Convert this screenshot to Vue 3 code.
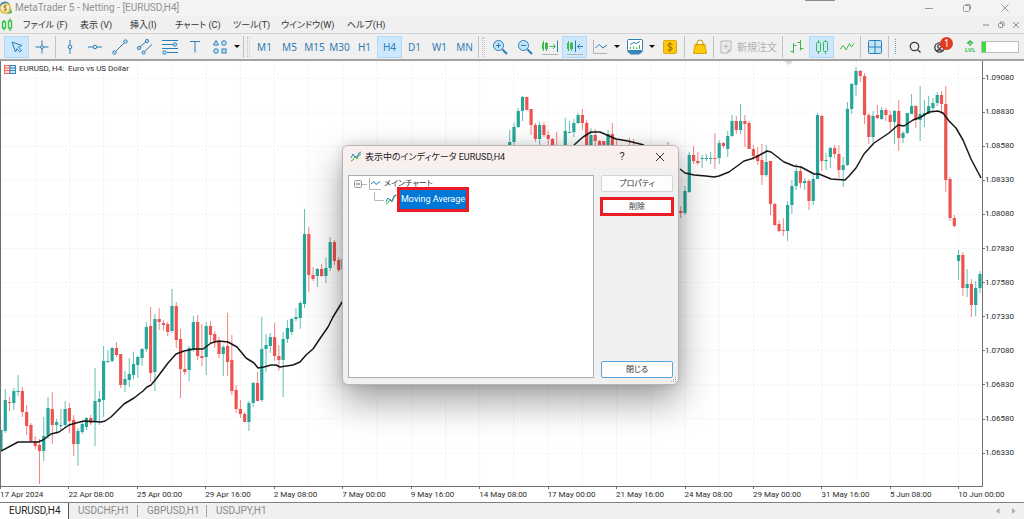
<script setup>
const menus = ['ファイル (F)', '表示 (V)', '挿入(I)', 'チャート (C)', 'ツール(T)', 'ウインドウ(W)', 'ヘルプ(H)']
const frames = ['M1', 'M5', 'M15', 'M30', 'H1', 'H4', 'D1', 'W1', 'MN']
const tabs = ['EURUSD,H4', 'USDCHF,H1', 'GBPUSD,H1', 'USDJPY,H1']
const prices = ['1.09080', '1.08830', '1.08580', '1.08330', '1.08080', '1.07830', '1.07580', '1.07330', '1.07080', '1.06830', '1.06580', '1.06330']
const times = ['17 Apr 2024', '22 Apr 08:00', '25 Apr 00:00', '29 Apr 16:00', '2 May 08:00', '7 May 00:00', '9 May 16:00', '14 May 08:00', '17 May 00:00', '21 May 16:00', '24 May 08:00', '29 May 00:00', '31 May 16:00', '5 Jun 08:00', '10 Jun 00:00']

// Each run: index of its first bar, then bars as "direction high low body-top body-bottom".
const runs = [
  [0, `u 430 451 430 450,u 389 433 400 431,d 397 411 402 403,u 388 410 391 403,u 375 396 391 392,d 387 417 391 412,d 405 435 412 426,d 423 442 425 441,d 436 449 441 446,d 439 484 445 451,u 417 461 436 451,u 397 439 408 436,d 392 444 409 425,u 419 434 422 425,u 409 431 425 426,u 401 428 409 425,d 403 433 408 421,d 415 456 420 444,u 428 466 431 444,u 421 434 424 432,u 417 430 418 427,d 415 425 418 423,u 368 446 401 422,u 391 425 399 402,u 346 417 361 400,u 350 363 361 362,u 347 362 348 361,d 342 357 348 355,d 354 388 354 385,u 371 392 379 385,u 358 387 374 380,u 352 379 364 375,u 356 378 357 365,u 348 366 349 358,u 322 352 327 349,d 307 382 326 373,u 314 391 319 372,d 308 330 319 322,d 320 331 323 325,d 322 336 324 332,u 289 333 306 331,d 302 348 306 340,d 329 398 339 369,d 352 375 369 372,u 346 381 348 370,u 316 352 322 350,d 315 360 322 356,d 324 366 356 358,u 322 375 326 357,d 321 343 326 335,d 331 348 334 342,d 337 358 342 354,u 345 376 347 354,d 313 376 346 362,d 335 395 360 391,d 385 413 390 409,d 400 418 409 414,d 412 422 414 422,u 401 431 403 422,u 382 407 383 403,d 372 401 383 401,u 317 402 349 400,u 334 372 345 349,u 333 353 337 346,d 323 361 337 356,d 345 371 356 360,u 332 397 339 360,u 320 343 328 339,u 318 335 319 332,u 308 321 317 319,u 301 329 303 318,u 209 308 234 304,d 227 292 234 275,d 267 281 275 279,u 268 287 269 276,d 264 277 269 276,u 258 283 268 276,u 237 271 242 268,d 240 265 242 261,d 257 272 260 270,u 255 276 259 269`],
  [119, `u 130 150 142 150,u 123 145 127 142,u 108 128 111 127,u 96 121 97 111,d 97 110 97 110,d 109 135 109 125,d 123 142 125 139,u 122 145 125 139,d 122 137 125 135,d 131 145 135 139,d 138 150 139 150,d 132 150 149 150`],
  [132, `u 118 150 131 150,u 121 133 132 133,u 119 137 123 132,u 113 124 115 123,d 109 130 115 123,d 120 150 123 150,u 128 150 135 150,d 129 150 135 141,d 140 150 141 150,d 141 150 141 150,u 130 150 134 150,d 123 150 134 145,d 139 150 146 150`],
  [147, `d 138 150 149 150,d 139 150 149 150`],
  [156, `d 142 150 149 150`],
  [159, `d 206 218 211 213,u 186 215 191 213,u 152 193 155 192,d 146 164 155 161,d 152 165 161 163,u 155 168 158 159,u 154 161 158 159,u 152 164 158 159,d 133 169 158 159,u 140 164 143 158,d 142 148 143 146,u 131 157 136 149,u 115 137 121 136,d 116 134 121 130,u 104 134 121 130,d 115 147 121 124,d 121 149 123 149,d 145 160 149 156,d 147 165 155 161,d 144 185 160 175,u 145 177 162 175,d 161 215 161 204,d 203 226 204 225,d 220 232 224 231,d 218 236 230 231,u 201 241 205 231,u 180 214 186 205,u 164 190 171 186,d 166 188 171 183,u 178 190 181 183,d 179 210 181 201,u 175 205 179 201,u 113 179 115 179,d 115 171 116 161,u 153 170 160 161,u 147 168 148 157,d 145 158 148 154,d 145 178 154 170,u 157 187 165 170,u 102 166 109 165,u 83 114 84 109,u 67 96 71 85,d 70 82 71 76,d 73 124 76 115,d 113 144 115 137,u 111 142 116 137,d 105 119 115 118,u 107 120 110 119,d 108 121 110 115,d 111 130 115 122,u 110 144 111 122,d 100 151 111 138,u 131 143 133 138,u 113 134 113 133,u 94 114 106 114,d 105 128 106 120,u 86 141 114 120,u 100 127 113 115,u 96 114 106 114,u 98 111 103 108,u 92 106 95 103,d 91 114 95 104,d 86 192 104 180,d 177 221 179 218,d 215 227 218 226,u 250 280 255 261,d 252 296 255 288,u 269 297 284 288,d 279 317 284 305,u 281 316 288 305,u 271 293 274 288`],
]
const STEP = 4.275
const candles = runs.flatMap(([start, text]) =>
  text.split(',').map((row, k) => {
    const [dir, ...v] = row.split(' ')
    const [hi, lo, top, bottom] = v.map(Number)
    return { id: start + k, dir, x: (start + k) * STEP, hi, lo, top, bottom }
  })
)
const average = [
  '0,451 17,442 23,442 37,442 42,440 50,434 58,432 68,425 75,423 83,421 100,422 104,421 110,417 123,404 133,398 142,391 146,387 150,385 155,379 167,363 175,354 183,351 193,349 202,349 210,343 218,341 227,342 236,347 245,358 253,363 257,368 263,367 270,365 275,365 279,367 292,365 299,362 305,355 312,349 318,340 327,327 332,317 343,299',
  '573,145 582,137 590,132 599,132 615,139 627,141 643,145',
  '679,169 684,173 693,175 705,176 713,177 718,176 728,172 743,161 750,159 757,156 766,151 770,152 783,162 793,166 800,167 813,174 818,174 830,179 844,180 848,176 855,168 863,154 873,143 888,133 897,125 903,126 912,120 920,117 928,112 937,111 942,113 948,121 955,128 962,140 970,159 980,178',
]
const vLines = Array.from({ length: 28 }, (_, i) => (i + 1) * 34.2)
const hLines = Array.from({ length: 12 }, (_, i) => 78 + i * 34.1)
</script>

<template>
  <div class="app">
    <header class="titlebar">
      <svg class="logo" width="13" height="14" viewBox="0 0 13 14">
        <circle cx="5" cy="7" r="6" fill="#e9c34a" />
        <path d="M1 2Q5-1 9 2L11 6Q10 2 5 2Q1 3-1 7Z" fill="#3b82b8" />
        <path d="M11 7L12 12L6 13.500Q10 12 11 7Z" fill="#4fae5a" />
        <circle cx="5" cy="7" r="4" fill="#f4efd8" />
        <path d="M7 5Q5 3.800 3.800 5Q3.500 6.500 5.300 7Q7.200 7.600 6.300 9Q5 10 3.400 9M5.200 3.500V10.500" fill="none" stroke="#a98a2e" />
      </svg>
      <span class="title">MetaTrader 5 - Netting - [EURUSD,H4]</span>
      <span class="handle"></span>
      <div class="winbtns">
        <button aria-label="最小化"><svg width="10" height="10"><path d="M1 5.500H9" /></svg></button>
        <button aria-label="元に戻す"><svg width="10" height="10"><rect x="1.500" y="2.500" width="6" height="6" rx="1" /><path d="M3.500 1.500H7Q8.500 1.500 8.500 3V6.500" /></svg></button>
        <button aria-label="終了"><svg width="10" height="10"><path d="M1.500 1.500L8.500 8.500M8.500 1.500L1.500 8.500" /></svg></button>
      </div>
    </header>

    <div class="menubar">
      <svg class="docicon" width="12" height="14" viewBox="0 0 12 14">
        <g fill="none" stroke="#35c24b" stroke-width="1.400"><rect x="1.500" y="4" width="3" height="6" /><rect x="7.500" y="3" width="3" height="7" /><path d="M3 2V4M3 10V12.500M9 .5V3M9 10V13" /></g>
      </svg>
      <nav class="menus"><button v-for="m in menus" :key="m">{{ m }}</button></nav>
      <div class="docbtns">
        <button aria-label="チャートを最小化"><svg width="8" height="8"><path d="M1 4H7" /></svg></button>
        <button aria-label="チャートを元に戻す"><svg width="8" height="8"><rect x="1.500" y="2.500" width="4" height="4" rx="1" /><path d="M3 1H5.500Q7 1 7 2.500V5" /></svg></button>
        <button aria-label="チャートを閉じる"><svg width="8" height="8"><path d="M1 1L7 7M7 1L1 7" /></svg></button>
      </div>
    </div>

    <div class="toolbar">
      <button class="tb on" aria-label="カーソル"><svg width="18" height="18" viewBox="0 0 18 18"><path class="b fillb" d="M4 4L14 7.500L10.500 9.200L13.500 12.500L11.800 14L8.800 10.800L7.500 14Z" /></svg></button>
      <button class="tb" aria-label="クロスヘア"><svg width="18" height="18" viewBox="0 0 18 18"><path class="b" d="M9 2.500V7.500M9 10.500V15.500M2.500 9H7.500M10.500 9H15.500" /><circle class="b" cx="9" cy="9" r="1.500" /></svg></button>
      <span class="sep"></span>
      <button class="tb" aria-label="垂直線"><svg width="18" height="18" viewBox="0 0 18 18"><path class="b" d="M9 2V7M9 11V16" /><circle class="b" cx="9" cy="9" r="1.800" /></svg></button>
      <button class="tb" aria-label="水平線"><svg width="18" height="18" viewBox="0 0 18 18"><path class="b" d="M2 9H7M11 9H16" /><circle class="b" cx="9" cy="9" r="1.800" /></svg></button>
      <button class="tb" aria-label="トレンドライン"><svg width="18" height="18" viewBox="0 0 18 18"><path class="b" d="M4.500 13.500L13.500 4.500" /><circle class="b fillb" cx="3.500" cy="14.500" r="1.700" /><circle class="b fillb" cx="14.500" cy="3.500" r="1.700" /></svg></button>
      <button class="tb" aria-label="チャネル"><svg width="18" height="18" viewBox="0 0 18 18"><path class="b" d="M4 9L10 3.500M8.500 13.500L16 6.500" /><circle class="b fillb" cx="3" cy="10" r="1.600" /><circle class="b fillb" cx="11" cy="3" r="1.600" /><circle class="b fillb" cx="7.500" cy="14.500" r="1.600" /></svg></button>
      <button class="tb" aria-label="フィボナッチ"><svg width="18" height="18" viewBox="0 0 18 18"><path class="b" d="M1 2.500H17M1 6.500H12M1 10.500H17M6 14.500H17" /><circle class="b fillb" cx="14" cy="6.500" r="1.700" /><circle class="b fillb" cx="3.500" cy="14.500" r="1.700" /></svg></button>
      <button class="tb" aria-label="テキスト"><svg width="18" height="18" viewBox="0 0 18 18"><path class="b" d="M4 3.500H14M9 3.500V14.500" /></svg></button>
      <button class="tb" aria-label="図形"><svg width="18" height="18" viewBox="0 0 18 18"><path class="b fillb" d="M5 2.500L7.500 7H2.500Z" /><circle class="b fillb" cx="13" cy="5" r="2.300" /><circle class="b fillb" cx="5" cy="13" r="2.300" /><rect class="b fillb" x="11" y="11" width="4" height="4" /></svg></button>
      <button class="drop" aria-label="図形の一覧"><svg width="6" height="3"><path d="M0 0H6L3 3Z" /></svg></button>
      <span class="sep"></span><span class="grip"></span>
      <button v-for="f in frames" :key="f" class="tb tf" :class="{ on: f === 'H4' }">{{ f }}</button>
      <span class="sep"></span><span class="grip"></span>
      <button class="tb" aria-label="拡大"><svg width="18" height="18" viewBox="0 0 18 18"><path class="b thick" d="M11.500 11.500L16 16" /><circle class="b fillb" cx="7.500" cy="7.500" r="5" /><path class="b" d="M5 7.500H10M7.500 5V10" /></svg></button>
      <button class="tb" aria-label="縮小"><svg width="18" height="18" viewBox="0 0 18 18"><path class="b thick" d="M11.500 11.500L16 16" /><circle class="b fillb" cx="7.500" cy="7.500" r="5" /><path class="b" d="M5 7.500H10" /></svg></button>
      <button class="tb" aria-label="自動スクロール"><svg width="18" height="18" viewBox="0 0 18 18"><path class="g" d="M2.500 3V13M5.500 4V13M8.500 8.500H14M12 6L14.500 8.500L12 11" /><rect class="gf" x="1" y="5" width="2" height="6" /><rect class="gf" x="4" y="5" width="3" height="6" /><path class="b" d="M16.500 2.500V14" /><path class="gray" d="M1 16.500H17" /></svg></button>
      <button class="tb on" aria-label="チャートシフト"><svg width="18" height="18" viewBox="0 0 18 18"><path class="g" d="M2.500 3V13M5.500 4V13" /><rect class="gf" x="1" y="5" width="2" height="6" /><rect class="gf" x="4" y="5" width="3" height="6" /><path class="b" d="M9.500 2.500V14M11.500 8.500H17M14 6L11.500 8.500L14 11" /><path class="gray" d="M1 16.500H17" /></svg></button>
      <button class="tb" aria-label="インディケータ"><svg width="18" height="18" viewBox="0 0 18 18"><path class="gray" d="M2.500 2V15.500H16" /><path class="b" d="M4.500 10L8 6.500L12 10L16 7" /></svg></button>
      <button class="drop" aria-label="インディケータの一覧"><svg width="6" height="3"><path d="M0 0H6L3 3Z" /></svg></button>
      <button class="tb" aria-label="テンプレート"><svg width="18" height="18" viewBox="0 0 18 18"><path d="M1.500 12V14L5 16.500H13L16.500 14V12Z" fill="#3d84b8" /><rect x="1.500" y="1.500" width="15" height="11" rx="1" fill="#fff" stroke="#2f7fb8" /><path class="b" d="M4 6.500L8 4.500L10 5.500L14 3.500" /><path class="g" d="M4.500 11V9M7.500 11V8.500M10.500 11V9.500M13.500 11V7" /></svg></button>
      <button class="drop" aria-label="テンプレートの一覧"><svg width="6" height="3"><path d="M0 0H6L3 3Z" /></svg></button>
      <button class="tb" aria-label="シグナル"><svg width="18" height="18" viewBox="0 0 18 18"><rect x="2.500" y="2.500" width="13" height="13" rx="1" fill="#fcc90c" stroke="#e2a906" /><path d="M11.500 6.500Q9 4.800 7 6.200Q6 8.300 9 9Q12 9.600 11 11.500Q9 13.200 6.500 11.500M9 4V14" fill="none" stroke="#a07000" /></svg></button>
      <span class="sep wide"></span>
      <button class="tb" aria-label="マーケット"><svg width="18" height="18" viewBox="0 0 18 18"><path d="M6 8V5Q6 2 9 2Q12 2 12 5V8" fill="none" stroke="#d09a08" /><path d="M4 6.500H14L15.500 15.500H2.500Z" fill="#fcc90c" stroke="#dba30a" /><path d="M6 8V5.500M12 8V5.500" stroke="#d09a08" /></svg></button>
      <span class="sep"></span>
      <button class="order" disabled><svg width="12" height="16" viewBox="0 0 12 16"><path d="M1 2H11V11L8 14H1Z" fill="#ececec" stroke="#b5b5b5" /><path d="M11 11H8V14M6 5V10M3.500 7.500H8.500" fill="none" stroke="#b5b5b5" /></svg><span>新規注文</span></button>
      <span class="sep"></span>
      <button class="tb" aria-label="バーチャート"><svg width="18" height="18" viewBox="0 0 18 18"><path class="g" d="M5.500 5V15.500M2.500 13.500H5.500M5.500 7.500H8.500M12.500 2V12.500M9.500 4.500H12.500M12.500 10.500H15.500" /></svg></button>
      <button class="tb on" aria-label="ローソク足"><svg width="18" height="18" viewBox="0 0 18 18"><path class="g" d="M5.500 2V4.500M5.500 13.500V16M12.500 2V3.500M12.500 13.500V16" /><rect class="g" x="3.500" y="4.500" width="4" height="9" rx="1" /><rect class="g" x="10.500" y="3.500" width="4" height="10" rx="1" /></svg></button>
      <button class="tb" aria-label="ラインチャート"><svg width="18" height="18" viewBox="0 0 18 18"><path class="g" d="M2 11.500L5 7.500L8 12L11.500 5.500L13.500 9L16 5.500" /></svg></button>
      <span class="sep"></span>
      <button class="tb" aria-label="ウィンドウを並べる"><svg width="18" height="18" viewBox="0 0 18 18"><rect class="b fillb" x="2.500" y="2.500" width="13" height="13" rx="1" /><path class="b" d="M9 2.500V15.500M2.500 9H15.500" /></svg></button>
      <span class="sep"></span><span class="grip blue"></span>
      <button class="tb" aria-label="検索"><svg width="18" height="18" viewBox="0 0 18 18"><circle class="k" cx="8.500" cy="8.500" r="4.200" /><path class="k" d="M11.500 11.500L14.500 14.500" /></svg></button>
      <button class="tb account" aria-label="アカウント"><svg width="18" height="18" viewBox="0 0 18 18"><circle class="k" cx="8.500" cy="9.500" r="4.700" /><circle class="k" cx="8.500" cy="8.500" r="1.800" /><path class="k" d="M5.500 13Q8.500 10.500 11.500 13" /></svg><span class="badge">1</span></button>
      <button class="lvl" aria-label="レベル"><svg width="10" height="7" viewBox="0 0 10 7"><path d="M1 3.500L5 0L9 3.500L7 3.500L5 6.500L3 3.500Z" fill="#2fbf4a" /><path d="M5 2.500V4.500" stroke="#efefef" /></svg><span>LVL</span></button>
      <span class="meter"><i></i></span>
    </div>

    <main class="chart">
      <div class="plot">
        <svg class="series" viewBox="0 61 981 425" preserveAspectRatio="none">
          <g class="grid">
            <line v-for="x in vLines" :key="'v' + x" :x1="x" :x2="x" y1="61" y2="487" />
            <line v-for="y in hLines" :key="'h' + y" x1="0" x2="982" :y1="y" :y2="y" />
          </g>
          <path d="M783 61H792L788 65Z" fill="#dcd6de" />
          <g v-for="c in candles" :key="c.id" :class="c.dir">
            <line :x1="c.x" :x2="c.x" :y1="c.hi" :y2="c.lo" />
            <rect :x="c.x - 1.600" :width="3.200" :y="c.top" :height="Math.max(c.bottom - c.top, 1)" />
          </g>
          <polyline v-for="p in average" :key="p" class="ma" :points="p" />
        </svg>
        <div class="symbol">
          <svg width="12" height="9" viewBox="0 0 12 9"><rect x=".5" y=".5" width="5.500" height="8" fill="#fbdcd9" stroke="#ee6b62" /><rect x="6" y=".5" width="5.500" height="8" fill="#d5e9f7" stroke="#3583bc" /><path d="M1 3H6M1 5.500H6" stroke="#ee6b62" /><path d="M6 3H11M6 5.500H11" stroke="#3583bc" /></svg>
          <span>EURUSD, H4:&nbsp; Euro vs US Dollar</span>
        </div>
      </div>
      <div class="prices"><span v-for="p in prices" :key="p">{{ p }}</span></div>
      <div class="times"><span v-for="t in times" :key="t">{{ t }}</span></div>
    </main>

    <footer class="tabs">
      <button v-for="(t, i) in tabs" :key="t" :class="{ active: i === 0 }">{{ t }}</button>
      <span class="scroll"><button aria-label="前へ"><svg width="4" height="6"><path d="M3.500 0V6L0 3Z" /></svg></button><button aria-label="次へ"><svg width="4" height="6"><path d="M0 0V6L3.500 3Z" /></svg></button></span>
    </footer>

    <section class="dialog" role="dialog" aria-labelledby="dlg-title">
      <div class="dlg-head">
        <svg width="12" height="12" viewBox="0 0 12 12"><path class="g" d="M1 10L3 9L5 5L7 8L9 4L11 3" /><path class="b" d="M1 7L3 3L5 6L7 6L9 2L11 1" /></svg>
        <h1 id="dlg-title">表示中のインディケータ EURUSD,H4</h1>
        <button class="help" aria-label="ヘルプ">?</button>
        <button class="close" aria-label="閉じる"><svg width="10" height="10"><path d="M1 1L9 9M9 1L1 9" /></svg></button>
      </div>
      <div class="dlg-body">
        <ul class="tree">
          <li class="root">
            <svg width="28" height="14" viewBox="0 0 28 14"><rect x=".5" y="3.500" width="7" height="7" rx="1" fill="#f3f3f3" stroke="#9a9a9a" /><path d="M2 7H6" stroke="#4c6a9a" /><path d="M8 7.500H13M15.500 1V12.500H27" fill="none" stroke="#b8b8b8" /><path class="b" d="M17 7L20 4.500L22 7.500L26 4.500" /></svg>
            <span>メインチャート</span>
          </li>
          <li class="leaf">
            <svg width="24" height="16" viewBox="0 0 24 16"><path d="M.5 0V8.500H10" fill="none" stroke="#b8b8b8" /><path class="g" d="M12 12L14 11L16 7L18 10L20 5L23 3" /><path class="b" d="M12 10L14 6L16 8L18 9L20 4L22 3" /></svg>
            <button class="picked">Moving Average</button>
          </li>
        </ul>
        <div class="actions">
          <button>プロパティ</button>
          <button class="marked">削除</button>
          <button class="ok">閉じる</button>
        </div>
      </div>
      <svg class="resize" width="7" height="7"><path d="M5 1h1v1H5zM3 3h1v1H3zM5 3h1v1H5zM1 5h1v1H1zM3 5h1v1H3zM5 5h1v1H5z" fill="#a5a5a5" /></svg>
    </section>
  </div>
</template>

<style>
body { margin: 0; }
</style>

<style scoped>
.app {
  position: relative;
  display: grid;
  grid-template-rows: 16px 17px 28px minmax(0, 1fr) 17px;
  height: 100vh;
  background: #fff;
  font-family: "Noto Sans", "Noto Sans CJK JP", sans-serif;
  font-feature-settings: "palt";
  color: #333;
  overflow: hidden;
}
button { margin: 0; padding: 0; border: 0; background: none; font: inherit; color: inherit; font-feature-settings: inherit; }
svg { display: block; flex: none; }
.b, .g, .k, .gray { fill: none; stroke-width: 1; }
.b { stroke: #2a7fba; }
.b.fillb { fill: #c3e3f7; }
.b.thick { stroke-width: 2; }
.g { stroke: #3fb84c; }
.gf { fill: #3fb84c; }
.k { stroke: #3c3c3c; stroke-width: 1.300; }
.gray { stroke: #b3b3b3; }

.titlebar, .menubar, .tabs, .dialog { font-family: Roboto, "Noto Sans CJK JP", sans-serif; }
.titlebar { position: relative; display: flex; align-items: center; padding-bottom: 1px; background: #f3f3f3; font-size: 10px; line-height: 14px; color: #929292; }
.title { margin-left: 2px; }
.handle { position: absolute; top: 0; right: 189px; width: 30px; height: 1px; background: #8c8c8c; }
.winbtns { display: flex; gap: 28px; margin-left: auto; padding-right: 14px; }
.winbtns svg, .docbtns svg { fill: none; stroke: #9a9a9a; }
.menubar { display: flex; align-items: center; background: #f0f0f0; font-size: 9px; line-height: 14px; }
.docicon { margin-left: 1px; }
.menus { display: grid; grid-template-columns: 57px 50px 45px 58px 48px 66px auto; margin-left: 10px; }
.menus button { text-align: left; white-space: nowrap; }
.docbtns { display: flex; gap: 7px; margin-left: auto; padding-right: 4px; }
.docbtns svg { stroke: #858585; }

.toolbar { display: flex; align-items: center; padding-left: 4px; background: #f0f0f0; border-top: 1px solid #d2d2d2; border-bottom: 2px solid #a3a3a3; font-size: 10px; line-height: 14px; color: #2f7db5; }
.tb { display: flex; align-items: center; justify-content: center; flex: none; box-sizing: border-box; width: 25px; height: 22px; border: 1px solid transparent; }
.tb.on { background: #cce8ff; border-color: #b3d9f7; }
.drop { display: flex; justify-content: center; flex: none; width: 10px; }
.drop svg { fill: #111; }
.sep { flex: none; width: 1px; height: 22px; margin: 0 1px; background: #c2c2c2; }
.sep.wide { margin: 0 2px; }
.grip { flex: none; height: 20px; margin: 0 2px; border-left: 1px dotted #bbb; border-right: 1px dotted #ccc; width: 1px; }
.grip.blue { margin: 0 5px; border-color: #5c9cc8; border-right: 0; height: 15px; }
.order { display: flex; align-items: center; gap: 5px; flex: none; width: 66px; padding-left: 5px; box-sizing: border-box; color: #b0b0b0; white-space: nowrap; }
.account { position: relative; }
.badge { position: absolute; top: 0; left: 12px; width: 13px; height: 13px; border-radius: 50%; background: #e03a20; color: #fff; font-size: 10px; line-height: 13px; text-align: center; }
.lvl { display: flex; flex-direction: column; align-items: center; width: 22px; margin-left: 7px; font-size: 6px; font-weight: 700; line-height: 6px; color: #2fbf4a; }
.meter { flex: 1; height: 10px; margin-right: 5px; border: 1px solid #bcbcbc; background: #fff; }
.meter i { display: block; width: 4px; height: 10px; background: #39dc39; }

.chart { display: grid; grid-template-columns: minmax(0, 1fr) 42px; grid-template-rows: minmax(0, 1fr) 15px; font-family: Roboto, "Noto Sans", sans-serif; font-size: 8px; line-height: 10px; color: #2c2c2c; }
.plot { position: relative; min-height: 0; box-sizing: border-box; border-left: 1px solid #707070; border-bottom: 1px solid #707070; }
.series { width: 100%; height: 100%; }
.grid line { stroke: #f0f0f0; stroke-dasharray: 2 2; }
.u line { stroke: #26a69a; opacity: .7; }
.u rect { fill: #26a69a; }
.d line { stroke: #ef5350; opacity: .7; }
.d rect { fill: #ef5350; }
.ma { fill: none; stroke: #181818; stroke-width: 1.500; stroke-linejoin: round; }
.symbol { position: absolute; top: 3px; left: 3px; display: flex; align-items: center; gap: 3px; }
.prices { display: grid; grid-template-rows: repeat(12, 341fr) 168fr; align-items: center; border-left: 1px solid #707070; }
.prices span { display: flex; align-items: center; white-space: nowrap; }
.prices span::before { content: ""; width: 2px; height: 1px; background: #707070; }
.times { grid-column: 1 / -1; display: grid; grid-template-columns: repeat(14, minmax(0, 342fr)) minmax(0, 328fr); }
.times span { position: relative; padding-top: 3px; white-space: nowrap; }
.times span::before { content: ""; position: absolute; top: 0; left: 0; width: 1px; height: 2px; background: #707070; }

.tabs { display: flex; align-items: center; background: #f0f0f0; border-top: 1px solid #808080; font-size: 10px; line-height: 14px; color: #8a8a8a; }
.tabs > button { box-sizing: border-box; width: 69px; padding-left: 9px; text-align: left; border-right: 1px solid #a0a0a0; line-height: 12px; white-space: nowrap; }
.tabs > button:nth-last-child(2) { border-right: 0; }
.tabs > button.active { align-self: stretch; background: #fff; color: #222; border-right: 1px solid #555; }
.scroll { display: flex; gap: 12px; margin-left: auto; padding-right: 8px; }
.scroll svg { fill: #aaa; }

.dialog { position: absolute; top: 145px; left: calc(50% - 170px); box-sizing: border-box; width: 337px; border: 1px solid #b9b5b5; border-radius: 6px; background: #f0f0f0; box-shadow: 0 16px 36px rgba(0, 0, 0, .38), 0 0 12px rgba(0, 0, 0, .12); overflow: hidden; font-size: 8px; line-height: 14px; }
.dlg-head { display: flex; align-items: center; height: 22px; padding: 0 13px 0 7px; background: #f9efef; }
.dlg-head h1 { margin: 0 auto 0 3px; font-size: 9px; font-weight: 400; white-space: nowrap; color: #222; }
.help { width: 10px; margin-right: 28px; font-size: 11px; }
.close svg { fill: none; stroke: #333; }
.dlg-body { display: grid; grid-template-columns: minmax(0, 1fr) 72px; gap: 7px; padding: 7px 5px 6px 5px; }
.tree { box-sizing: border-box; height: 203px; margin: 0; padding: 1px 5px; list-style: none; background: #fff; border: 1px solid #a9afb8; }
.tree li { display: flex; align-items: center; }
.root { gap: 2px; height: 14px; }
.leaf { height: 17px; padding-left: 20px; }
.picked { padding: 1px; margin-left: 2px; background: #0078d7; color: #fff; outline: 3px solid #ec1c24; white-space: nowrap; font-size: 9px; line-height: 17px; }
.actions { display: flex; flex-direction: column; gap: 6px; }
.actions button { box-sizing: border-box; height: 17px; border: 1px solid #d5d5d5; border-radius: 2px; background: #fdfdfd; line-height: 14px; }
.actions .marked { outline: 3px solid #ec1c24; outline-offset: -2px; border-radius: 0; line-height: 12px; }
.actions .ok { margin-top: auto; border-color: #5ba7dc; }
.resize { position: absolute; right: 1px; bottom: 1px; }
</style>
